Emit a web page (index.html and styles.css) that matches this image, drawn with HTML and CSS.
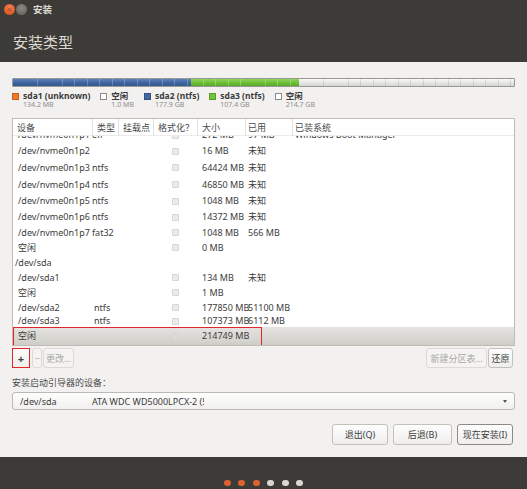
FILE: index.html
```html
<!DOCTYPE html>
<html lang="zh-CN">
<head>
<meta charset="utf-8">
<title>安装</title>
<link rel="stylesheet" href="styles.css">
</head>
<body>
<div class="window">
  <div class="titlebar">
    <span class="wbtn close">
      <svg width="11" height="11" viewBox="0 0 11 11"><path d="M3.6 3.6 7.4 7.4M7.4 3.6 3.6 7.4" stroke="#8a3312" stroke-width="1.1" stroke-opacity=".55"/></svg>
    </span>
    <span class="wbtn min"></span>
    <span class="wtitle">安装</span>
  </div>
  <div class="header"><h1>安装类型</h1></div>

  <div class="main">
    <div class="diskbar">
      <div class="seg orange" style="width:0.03%"></div>
      <div class="seg blue" style="width:35.57%"></div>
      <div class="seg green" style="width:21.48%"></div>
      <div class="seg free" style="width:42.92%"></div>
    </div>

    <div class="legend">
      <div class="lg-item">
        <span class="sw sw-orange"></span>
        <div class="lg-text"><div class="lg-name">sda1 (unknown)</div><div class="lg-size">134.2 MB</div></div>
      </div>
      <div class="lg-item">
        <span class="sw sw-free"></span>
        <div class="lg-text"><div class="lg-name">空闲</div><div class="lg-size">1.0 MB</div></div>
      </div>
      <div class="lg-item">
        <span class="sw sw-blue"></span>
        <div class="lg-text"><div class="lg-name">sda2 (ntfs)</div><div class="lg-size">177.9 GB</div></div>
      </div>
      <div class="lg-item">
        <span class="sw sw-green"></span>
        <div class="lg-text"><div class="lg-name">sda3 (ntfs)</div><div class="lg-size">107.4 GB</div></div>
      </div>
      <div class="lg-item">
        <span class="sw sw-free"></span>
        <div class="lg-text"><div class="lg-name">空闲</div><div class="lg-size">214.7 GB</div></div>
      </div>
    </div>

    <div class="ptable">
      <div class="thead">
        <div class="th">设备</div>
        <div class="th">类型</div>
        <div class="th">挂载点</div>
        <div class="th">格式化？</div>
        <div class="th">大小</div>
        <div class="th">已用</div>
        <div class="th">已装系统</div>
      </div>
      <div class="tbody">
        <div class="row first">
          <div class="td dev">/dev/nvme0n1p1</div><div class="td type">efi</div><div class="td"></div>
          <div class="td fmt"><span class="chk"></span></div><div class="td size">272 MB</div><div class="td used">97 MB</div><div class="td sys">Windows Boot Manager</div>
        </div>
        <div class="row h16">
          <div class="td dev">/dev/nvme0n1p2</div><div class="td type"></div><div class="td"></div>
          <div class="td fmt"><span class="chk"></span></div><div class="td size">16 MB</div><div class="td used">未知</div><div class="td sys"></div>
        </div>
        <div class="row h17">
          <div class="td dev">/dev/nvme0n1p3</div><div class="td type">ntfs</div><div class="td"></div>
          <div class="td fmt"><span class="chk"></span></div><div class="td size">64424 MB</div><div class="td used">未知</div><div class="td sys"></div>
        </div>
        <div class="row h17">
          <div class="td dev">/dev/nvme0n1p4</div><div class="td type">ntfs</div><div class="td"></div>
          <div class="td fmt"><span class="chk"></span></div><div class="td size">46850 MB</div><div class="td used">未知</div><div class="td sys"></div>
        </div>
        <div class="row h16">
          <div class="td dev">/dev/nvme0n1p5</div><div class="td type">ntfs</div><div class="td"></div>
          <div class="td fmt"><span class="chk"></span></div><div class="td size">1048 MB</div><div class="td used">未知</div><div class="td sys"></div>
        </div>
        <div class="row h16">
          <div class="td dev">/dev/nvme0n1p6</div><div class="td type">ntfs</div><div class="td"></div>
          <div class="td fmt"><span class="chk"></span></div><div class="td size">14372 MB</div><div class="td used">未知</div><div class="td sys"></div>
        </div>
        <div class="row">
          <div class="td dev">/dev/nvme0n1p7</div><div class="td type">fat32</div><div class="td"></div>
          <div class="td fmt"><span class="chk"></span></div><div class="td size">1048 MB</div><div class="td used">566 MB</div><div class="td sys"></div>
        </div>
        <div class="row">
          <div class="td dev">空闲</div><div class="td type"></div><div class="td"></div>
          <div class="td fmt"><span class="chk"></span></div><div class="td size">0 MB</div><div class="td used"></div><div class="td sys"></div>
        </div>
        <div class="row">
          <div class="td dev parent">/dev/sda</div>
        </div>
        <div class="row">
          <div class="td dev">/dev/sda1</div><div class="td type"></div><div class="td"></div>
          <div class="td fmt"><span class="chk"></span></div><div class="td size">134 MB</div><div class="td used">未知</div><div class="td sys"></div>
        </div>
        <div class="row">
          <div class="td dev">空闲</div><div class="td type"></div><div class="td"></div>
          <div class="td fmt"><span class="chk"></span></div><div class="td size">1 MB</div><div class="td used"></div><div class="td sys"></div>
        </div>
        <div class="row">
          <div class="td dev">/dev/sda2</div><div class="td type sub">ntfs</div><div class="td"></div>
          <div class="td fmt"><span class="chk"></span></div><div class="td size">177850 MB</div><div class="td used">51100 MB</div><div class="td sys"></div>
        </div>
        <div class="row h12">
          <div class="td dev">/dev/sda3</div><div class="td type sub">ntfs</div><div class="td"></div>
          <div class="td fmt"><span class="chk"></span></div><div class="td size">107373 MB</div><div class="td used">6112 MB</div><div class="td sys"></div>
        </div>
        <div class="row selected">
          <div class="td dev">空闲</div><div class="td type"></div><div class="td"></div>
          <div class="td fmt"><span class="chk"></span></div><div class="td size">214749 MB</div><div class="td used"></div><div class="td sys"></div>
        </div>
      </div>
    </div>

    <div class="toolbar">
      <button class="btn small add">+</button>
      <button class="btn small minus" disabled>−</button>
      <button class="btn small change" disabled>更改...</button>
      <button class="btn small newtable" disabled>新建分区表...</button>
      <button class="btn small revert">还原</button>
    </div>

    <div class="bootlabel">安装启动引导器的设备：</div>
    <div class="combo">
      <span class="c-dev">/dev/sda</span>
      <span class="c-name">ATA WDC WD5000LPCX-2 (500.1 GB)</span>
      <span class="c-arrow"></span>
    </div>

    <div class="actions">
      <button class="btn act quit">退出(Q)</button>
      <button class="btn act back">后退(B)</button>
      <button class="btn act install">现在安装(I)</button>
    </div>
  </div>

  <div class="footer">
    <span class="dot on"></span><span class="dot on"></span><span class="dot on"></span>
    <span class="dot"></span><span class="dot"></span><span class="dot"></span>
  </div>
</div>
</body>
</html>
```

FILE: styles.css
```css
* { box-sizing: border-box; margin: 0; padding: 0; }
html, body { width: 527px; height: 489px; overflow: hidden; }
body {
  font-family: "Noto Sans", "Noto Sans CJK SC", sans-serif;
  font-size: 9px;
  color: #3c3c3c;
  background: #f2f1f0;
}
.window { display: flex; flex-direction: column; height: 489px; }

/* title bar */
.titlebar {
  height: 19px;
  background: #3c3b37;
  display: flex;
  align-items: center;
  padding-left: 4px;
}
.wbtn { width: 11px; height: 11px; border-radius: 50%; display: block; }
.wbtn svg { display: block; }
.close { background: radial-gradient(circle at 50% 35%, #f58a5c 0, #e5602d 55%, #c24a1c 100%); }
.min { margin-left: 1px; background: radial-gradient(circle at 50% 35%, #8a8883 0, #6c6a65 70%, #5a5853 100%); }
.wtitle {
  margin-left: 6px;
  color: #dfdbd2;
  font-size: 9.5px;
  font-weight: bold;
  line-height: 12px;
}

/* header */
.header { height: 43px; background: #3c3b37; padding: 14px 0 0 13px; }
.header h1 {
  font-size: 15px;
  line-height: 18px;
  font-weight: normal;
  color: #dedad2;
}

/* main */
.main {
  flex: 1;
  display: flex;
  flex-direction: column;
  padding: 16px 12px 0 12px;
}

.diskbar {
  height: 9px;
  display: flex;
  border: 1px solid #9a9893;
  border-radius: 1px;
  overflow: hidden;
}
.seg { height: 100%; }
.orange { background: #e8772a; }
.blue {
  background:
    repeating-linear-gradient(90deg, transparent 0 11.5px, rgba(255,255,255,.22) 11.5px 12.5px),
    linear-gradient(#5b82bb, #3e64a0 55%, #35598f);
}
.green {
  background:
    repeating-linear-gradient(90deg, transparent 0 11.5px, rgba(255,255,255,.25) 11.5px 12.5px),
    linear-gradient(#8fd65a, #6cbf35 55%, #5aa82b);
}
.free {
  background:
    repeating-linear-gradient(90deg, transparent 0 11.5px, rgba(0,0,0,.10) 11.5px 12.5px),
    linear-gradient(#fafafa, #e4e4e2 60%, #d6d5d2);
}

/* legend */
.legend { display: flex; margin-top: 3px; height: 19px; }
.lg-item { display: flex; gap: 4px; margin-right: 10px; }
.sw { width: 7px; height: 7px; margin-top: 3px; border: 1px solid; flex: none; }
.sw-orange { background: #ee7b25; border-color: #c9601a; }
.sw-blue { background: #44699f; border-color: #30507e; }
.sw-green { background: #74c43b; border-color: #56a02a; }
.sw-free { background: #fff; border-color: #8c8b88; }
.lg-name { font-size: 8.5px; font-weight: bold; line-height: 11px; color: #3a3a3a; }
.lg-size { font-size: 7px; line-height: 8px; color: #8e8d8a; }

/* partition table */
.ptable {
  margin-top: 9px;
  height: 228px;
  border: 1px solid #bfbcb5;
  background: #fff;
  display: flex;
  flex-direction: column;
}
.thead, .row {
  display: grid;
  grid-template-columns: 79px 26px 35px 44px 48px 47px 1fr;
}
.thead { height: 17px; border-bottom: 1px solid #ecebea; flex: none; position: relative; z-index: 1; background: #fff; }
.th {
  padding-left: 4px;
  line-height: 17px;
  color: #4a4a4a;
  border-left: 1px solid #e2e1df;
  white-space: nowrap;
}
.th:first-child { border-left: none; }
.th:nth-child(6), .th:nth-child(7) { padding-left: 2px; }

.tbody { height: 209px; overflow: hidden; flex: none; }
.row { height: 15px; align-items: center; position: relative; }
.row.first { height: 16px; margin-top: -9px; }
.row.h16 { height: 16px; }
.row.h17 { height: 17px; }
.row.h12 { height: 12px; }
.td { white-space: nowrap; line-height: 12px; color: #3c3c3c; }
.td.dev { padding-left: 5px; overflow: visible; }
.td.dev.parent { padding-left: 2px; }
.td.type { padding-left: 0; }
.td.type.sub { padding-left: 2px; }
.td.fmt { display: flex; justify-content: center; }
.chk {
  width: 7px; height: 7px;
  background: #ebebea;
  border: 1px solid #d6d5d3;
  border-radius: 1px;
}
.td.size { padding-left: 5px; }
.td.used { padding-left: 3px; }
.td.sys { padding-left: 3px; }

.row.selected {
  height: 18px;
  background: linear-gradient(#e4e3e0, #d9d7d3 60%, #cfcdc8);
}
.row.selected .chk { background: #dcdbd8; border-color: #d4d3d0; }
.row.selected::after {
  content: "";
  position: absolute;
  left: 0; top: 0; width: 247px; height: 18px;
  border: 1.5px solid #e2242b;
  z-index: 2;
}

/* buttons */
.btn {
  font-family: inherit;
  font-size: 9px;
  color: #3c3c3c;
  background: linear-gradient(#fdfdfd, #efeeec);
  border: 1px solid #c4c1bb;
  border-radius: 3px;
  line-height: 1;
  white-space: nowrap;
}
.btn:disabled {
  color: #a9a7a3;
  background: #f4f3f2;
  border-color: #dcdad6;
}

.toolbar { display: flex; margin-top: 2px; height: 20px; }
.btn.small { height: 20px; }
.add {
  width: 18px;
  border: 1.5px solid #e2242b;
  border-radius: 0;
  font-size: 11px;
  font-weight: bold;
}
.minus { width: 10px; margin-left: 2px; padding: 0; font-size: 9px; }
.change { width: 31px; margin-left: 1px; padding: 0; }
.newtable { width: 61px; margin-left: auto; padding: 0; }
.revert { width: 25px; margin-left: 1px; margin-right: 2px; padding: 0; }

.bootlabel { margin-top: 9px; line-height: 12px; color: #4a4a4a; }

.combo {
  margin-top: 3px;
  height: 18px;
  border: 1px solid #bdbab3;
  border-radius: 3px;
  background: linear-gradient(#fefefe, #f1f0ee);
  display: flex;
  align-items: center;
  padding-left: 7px;
  position: relative;
}
.c-dev { width: 72px; flex: none; }
.c-name { width: 112px; overflow: hidden; white-space: nowrap; flex: none; }
.c-arrow {
  margin-left: auto;
  margin-right: 7px;
  width: 0; height: 0;
  border-left: 2.5px solid transparent;
  border-right: 2.5px solid transparent;
  border-top: 3px solid #555;
}

.actions {
  margin-top: 14px;
  display: flex;
  justify-content: flex-end;
  gap: 5px;
  padding-right: 2px;
}
.btn.act { height: 21px; }
.quit { width: 56px; }
.back { width: 59px; }
.install { width: 56px; border-color: #8e8b85; }

/* footer */
.footer {
  height: 32px;
  background: #3c3b37;
  display: flex;
  justify-content: center;
  align-items: flex-start;
  gap: 7.6px;
  padding-top: 23px;
}
.dot { width: 7px; height: 5.5px; border-radius: 3px; background: #d9d7d2; }
.dot.on { background: #dd6230; }
```
